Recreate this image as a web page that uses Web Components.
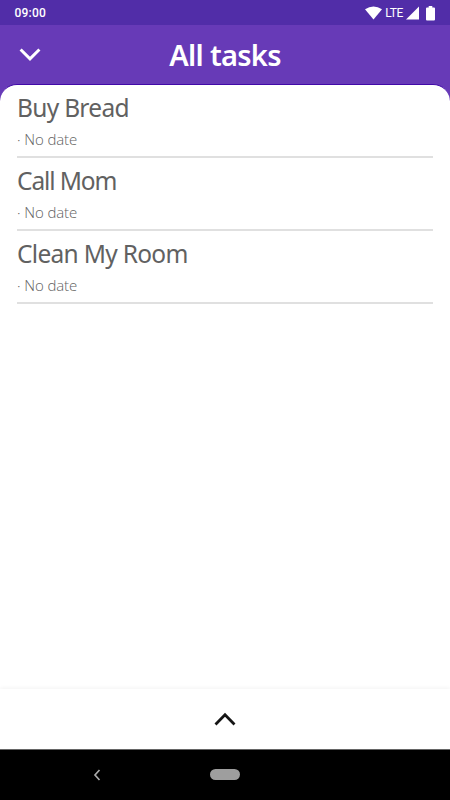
<!DOCTYPE html>
<html lang="en">
<head>
<meta charset="utf-8">
<title>All tasks</title>
<style>
html,body{margin:0;height:100%;overflow:hidden}
body{font-family:"Noto Sans","Open Sans",sans-serif}
</style>
</head>
<body>
<task-app></task-app>
<script>
function define(name, html) {
  const t = document.createElement('template');
  t.innerHTML = html;
  customElements.define(name, class extends HTMLElement {
    constructor() {
      super();
      this.attachShadow({mode: 'open'}).append(t.content.cloneNode(true));
    }
  });
}

define('status-bar', `
<style>
:host{display:flex;align-items:center;box-sizing:border-box;height:25px;padding:1px 15px 0 14.500px;background:#512da8;color:#fff;font:500 12px/24px Roboto,sans-serif}
.time{flex:1;letter-spacing:.2px}
.lte{font-weight:400;font-size:12px;margin:0 3px 0 3px;letter-spacing:-.35px}
svg{display:block;fill:#fff}
.bat{margin-left:7px}
</style>
<span class="time">09:00</span>
<svg width="17" height="14" viewBox="0 0 17 14"><path d="M0 3.2Q8.5-2.4 17 3.2L8.5 13.4Z"/></svg>
<span class="lte">LTE</span>
<svg width="13" height="14" viewBox="0 0 13 14"><path d="M13 .4V13.4H0Z"/></svg>
<svg class="bat" width="9" height="15" viewBox="0 0 9 15"><path d="M2.7 0h3.6v1.6H8q1 0 1 1V13.500q0 1-1 1H1q-1 0-1-1V2.600q0-1 1-1h1.700Z"/></svg>
`);

define('app-header', `
<style>
:host{display:grid;grid-template-columns:60px 1fr 60px;align-items:center;height:59px;background:#673ab7;color:#fff}
svg{display:block;justify-self:center}
h1{margin:0;text-align:center;font:600 29px/40px "Noto Sans",sans-serif;letter-spacing:-.7px}
</style>
<svg width="22" height="14" viewBox="0 0 22 14" fill="none" stroke="#fff" stroke-width="3"><path d="M1.600 1.500L11 10.900L20.400 1.500"/></svg>
<h1><slot></slot></h1>
`);

define('task-item', `
<style>
:host{display:block;box-sizing:border-box;height:73px;border-bottom:2px solid #e0e0e0;color:#616161}
.name{height:43px;font:400 24.500px/45px "Noto Sans",sans-serif;letter-spacing:var(--tracking,-.7px);white-space:nowrap}
.date{font:300 15px/22px "Open Sans",sans-serif;letter-spacing:-.12px;white-space:nowrap}
</style>
<div class="name"><slot></slot></div>
<div class="date"><slot name="date"></slot></div>
`);

define('bottom-sheet', `
<style>
:host{display:flex;align-items:center;justify-content:center;box-sizing:border-box;height:61px;background:#fff;box-shadow:0 -1px 4px #0000000d;border-bottom:1px solid #666}
svg{display:block}
</style>
<svg width="22" height="14" viewBox="0 0 22 14" fill="none" stroke="#151515" stroke-width="2.800"><path d="M1.500 12.400L11 2.800L20.500 12.400"/></svg>
`);

define('system-nav', `
<style>
:host{display:grid;grid-template-columns:194px 30px;column-gap:16px;align-items:center;box-sizing:border-box;height:50px;padding-bottom:1px;background:#000}
svg{display:block;justify-self:center}
.pill{height:11px;border-radius:6px;background:#9e9e9e}
</style>
<svg width="8" height="12" viewBox="0 0 8 12" fill="none" stroke="#aaa" stroke-width="1.700"><path d="M6.500 1L2 6L6.500 11"/></svg>
<span class="pill"></span>
`);

define('task-app', `
<style>
:host{display:flex;flex-direction:column;width:450px;height:800px;background:#673ab7}
main{flex:1;box-sizing:border-box;padding:0 17px;background:#fff;border-top:1px solid #4209a8;border-radius:17px 17px 0 0}
task-item:nth-child(2){--tracking:-1.1px}
</style>
<status-bar></status-bar>
<app-header>All tasks</app-header>
<main>
<task-item>Buy Bread<span slot="date">· No date</span></task-item>
<task-item>Call Mom<span slot="date">· No date</span></task-item>
<task-item>Clean My Room<span slot="date">· No date</span></task-item>
</main>
<bottom-sheet></bottom-sheet>
<system-nav></system-nav>
`);
</script>
</body>
</html>
